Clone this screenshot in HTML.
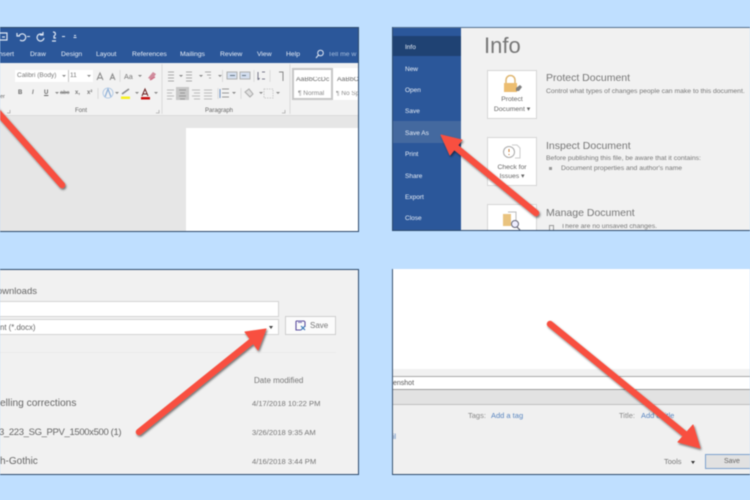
<!DOCTYPE html>
<html><head><meta charset="utf-8">
<style>
html,body{margin:0;padding:0;width:750px;height:500px;overflow:hidden;background:#bfdfff}
#w{position:absolute;left:0;top:0;width:750px;height:500px;overflow:hidden;filter:blur(.45px);font-family:"Liberation Sans",sans-serif}
.b{position:absolute}
.t{position:absolute;white-space:nowrap;line-height:1}
.tab{top:52px;font-size:6.800px;color:#e8eef7}
.nav{left:405px;font-size:6.500px;color:#e8eef7}
</style></head><body><div id="w">

<!-- Panel 1 -->
<div class="b" style="left:0;top:27px;width:358px;height:205px;background:#e6e6e6"></div>
<div class="b" style="left:0;top:27px;width:358px;height:36px;background:#2b579a"></div>
<div class="b" style="left:0;top:63px;width:358px;height:52px;background:#f2f2f2;border-bottom:1px solid #dcdcdc"></div>
<div class="b" style="left:186px;top:128px;width:172px;height:103px;background:#fff"></div>
<svg class="b" style="left:0;top:27px" width="100" height="22" viewBox="0 27 100 22"><g fill="none" stroke="#dfe7f3" stroke-width="1.200"><path d="M0 33h7v7H0"/><path d="M2 37h3"/><path d="M19 36a3.500 3.500 0 1 1 1 4M17 33v3h3"/><path d="M43 35a3.500 3.500 0 1 0 1 3M43 32v3h-3"/><path d="M53 32c3 0 3 3 1 4v2h2M52 41h4"/></g><path d="M27 36.500h3M62 36.500h3M74 35.500h2M73.500 37.500h3" stroke="#dfe7f3"/></svg>
<div class="t tab" style="left:-3px">Insert</div>
<div class="t tab" style="left:30px">Draw</div>
<div class="t tab" style="left:61px">Design</div>
<div class="t tab" style="left:96px">Layout</div>
<div class="t tab" style="left:132px">References</div>
<div class="t tab" style="left:180px">Mailings</div>
<div class="t tab" style="left:220px">Review</div>
<div class="t tab" style="left:257px">View</div>
<div class="t tab" style="left:286px">Help</div>
<svg class="b" style="left:315px;top:49px" width="10" height="10"><circle cx="5.500" cy="4" r="2.800" fill="none" stroke="#dfe7f3"/><path d="M3.500 6L1 9" stroke="#dfe7f3"/></svg>
<div class="t tab" style="left:328px;color:#a9bfde;width:30px;overflow:hidden">Tell me w</div>

<div class="t" style="left:0;top:95px;font-size:5.500px;color:#666">er</div>
<div class="b" style="left:15px;top:70px;width:53px;height:12px;background:#fff"></div>
<div class="b" style="left:68px;top:70px;width:24px;height:12px;background:#fff;border-left:1px solid #c4c4c4"></div>
<div class="t" style="left:17px;top:73px;font-size:6.500px;color:#777">Calibri (Body)</div>
<div class="t" style="left:70px;top:73px;font-size:6.500px;color:#777">11</div>
<svg class="b" style="left:0;top:64px" width="360" height="52" viewBox="0 64 360 52">
<path d="M62 75l2 2 2-2zM87 75l2 2 2-2zM138 75l2 2 2-2zM179 75l2 2 2-2zM199 75l2 2 2-2zM218 75l2 2 2-2zM55 92l2 2 2-2zM115 92l2 2 2-2zM135 92l2 2 2-2zM154 92l2 2 2-2zM232 92l2 2 2-2zM259 92l2 2 2-2zM276 92l2 2 2-2z" fill="#888"/>
<g stroke="#dadada" fill="none"><path d="M120 70v12M162 64v50M98 88v11M222.500 70v12M254 70v12M270 70v12M218 88v11M241 88v11M290 64v50"/></g>
<path d="M97 80l3-7 3 7M98 78h4M110 80l2.500-6 2.500 6M111 78h3" fill="none" stroke="#888" stroke-width="1"/>
<path d="M148 78l5-6 3 2-4 6z" fill="#d08b9c"/><path d="M150 80l5-3" stroke="#cf6980" stroke-width="1.300"/>
<g stroke="#aaa"><path d="M168 72h6M168 75h6M168 78h6M168 81h6"/><path d="M186 72h6M186 75h6M186 78h6M186 81h6"/><path d="M205 72h6M207 75h4M209 78h2"/></g>
<g fill="#d3deee" stroke="#b0b0b0"><rect x="227" y="72" width="10" height="7"/><rect x="240" y="72" width="10" height="7"/></g>
<path d="M230 75.500h5M246 75.500h-4" stroke="#678"/>
<path d="M258 72v8M262 72h3M262 79h3" stroke="#778" fill="none"/><path d="M257 78l2 2 1-2" fill="#778"/>
<path d="M279 72h4v9M283 72v9" stroke="#888" fill="none"/>
<rect x="176" y="87" width="13" height="13" fill="#c8c8c8"/>
<g stroke="#bbb"><path d="M167 90h7M167 93h5M167 96h7M167 99h5"/><path d="M179 90h7M180 93h5M179 96h7M180 99h5" stroke="#999"/><path d="M192 90h8M194 93h6M192 96h8M194 99h6"/><path d="M204 90h8M204 93h8M204 96h8M204 99h8"/></g>
<path d="M222 89h7M222 93h7M222 97h7" stroke="#999"/><path d="M220 89v9" stroke="#6a90c2"/>
<path d="M245 92l4-3 4 5-3 3z" fill="#e0e0e0" stroke="#aaa"/>
<rect x="264" y="89" width="9" height="9" fill="none" stroke="#ccc" stroke-dasharray="1.500 1"/>
<path d="M105 97l3-8 3 8" fill="none" stroke="#8fb0d8" stroke-width="1.200"/>
<circle cx="108" cy="93" r="5" fill="none" stroke="#aac4e3" stroke-width=".8"/>
<path d="M122 94l7-5" stroke="#888" stroke-width="1.500"/><rect x="121" y="96.500" width="9" height="2.500" fill="#f6f01e"/>
<path d="M142 96l3-7 3 7M143 94h4" fill="none" stroke="#6b2020" stroke-width="1"/><rect x="141" y="97" width="9" height="2.500" fill="#c91010"/>
<path d="M7 113h3v-3M156 113h3v-3M282 113h3v-3" stroke="#aaa" fill="none" stroke-width=".8"/>
</svg>
<div class="t" style="left:18px;top:90px;font-size:6px;font-weight:bold;color:#666">B</div>
<div class="t" style="left:32px;top:90px;font-size:6px;font-style:italic;font-weight:bold;color:#777">I</div>
<div class="t" style="left:44px;top:90px;font-size:6px;font-weight:bold;color:#666;text-decoration:underline">U</div>
<div class="t" style="left:60px;top:90.500px;font-size:5.800px;color:#777;text-decoration:line-through">abc</div>
<div class="t" style="left:75px;top:90px;font-size:6px;font-weight:bold;color:#777">x,</div>
<div class="t" style="left:87px;top:90px;font-size:6px;font-weight:bold;color:#777">x²</div>
<div class="t" style="left:124px;top:72.500px;font-size:7.200px;color:#777">Aa</div>
<div class="t" style="left:75px;top:108px;font-size:6px;color:#666">Font</div>
<div class="t" style="left:205px;top:108px;font-size:6px;color:#666">Paragraph</div>
<div class="b" style="left:292px;top:68px;width:41px;height:32px;background:#fff;border:2px solid #c6c6c6;box-sizing:border-box"></div>
<div class="b" style="left:333px;top:68px;width:25px;height:32px;background:#fff"></div>
<div class="t" style="left:296px;top:77px;font-size:6.800px;color:#666;width:34px;overflow:hidden">AaBbCcDc</div>
<div class="t" style="left:337px;top:77px;font-size:6.800px;color:#666;width:21px;overflow:hidden">AaBbC</div>
<div class="t" style="left:298px;top:90.500px;font-size:6.500px;color:#888">¶ Normal</div>
<div class="t" style="left:336px;top:90.500px;font-size:6.500px;color:#888;width:22px;overflow:hidden">¶ No Sp</div>
<div class="b" style="left:358px;top:27px;width:1px;height:205px;background:#2e4a6c"></div>
<div class="b" style="left:0;top:27px;width:359px;height:1px;background:#2e4a6c"></div>
<div class="b" style="left:0;top:231px;width:359px;height:1px;background:#2e4a6c"></div>

<!-- Panel 2 -->
<div class="b" style="left:392px;top:27px;width:358px;height:204px;background:#f1f1f1;overflow:hidden"></div>
<div class="b" style="left:392px;top:27px;width:69px;height:204px;background:#2b579a"></div>
<div class="b" style="left:392px;top:36px;width:69px;height:20px;background:#1f4273"></div>
<div class="b" style="left:392px;top:121px;width:69px;height:22px;background:#44699f"></div>
<div class="b" style="left:392px;top:27px;width:358px;height:1px;background:#54708f"></div>
<div class="b" style="left:392px;top:230px;width:358px;height:1px;background:#2e4a6c"></div>
<div class="b" style="left:392px;top:27px;width:1px;height:204px;background:#2e4a6c"></div>
<div class="t nav" style="top:45px">Info</div>
<div class="t nav" style="top:67px">New</div>
<div class="t nav" style="top:88px">Open</div>
<div class="t nav" style="top:109px">Save</div>
<div class="t nav" style="top:131px">Save As</div>
<div class="t nav" style="top:152px">Print</div>
<div class="t nav" style="top:174px">Share</div>
<div class="t nav" style="top:195px">Export</div>
<div class="t nav" style="top:216px">Close</div>
<div class="t" style="left:484px;top:34.500px;font-size:22px;color:#777">Info</div>
<div class="b" style="left:487px;top:70px;width:50px;height:49px;background:#fff;border:1px solid #d6d6d6;box-sizing:border-box"></div>
<div class="b" style="left:487px;top:137px;width:50px;height:49px;background:#fff;border:1px solid #d6d6d6;box-sizing:border-box"></div>
<div class="b" style="left:487px;top:204px;width:50px;height:26px;background:#fff;border:1px solid #d6d6d6;border-bottom:0;box-sizing:border-box"></div>
<svg class="b" style="left:486px;top:69px" width="51" height="161" viewBox="0 0 51 161">
<path d="M20 14v-3a4.500 4.500 0 0 1 9 0v3" fill="none" stroke="#dfb670" stroke-width="1.500"/><rect x="18" y="14" width="13" height="9" fill="#ecbd70"/><path d="M30 19l4-3 2 2-3 4-3 0z" fill="#808080"/>
<circle cx="23" cy="83" r="5.500" fill="none" stroke="#aaa"/><path d="M26 76h5l3 3v10h-5" fill="none" stroke="#ccc"/><path d="M23 80v3M23 85v1" stroke="#c97a30"/>
<path d="M17 145h8v12h-8z" fill="#e9c37f"/><path d="M22 143h8v9" fill="none" stroke="#bbb"/><circle cx="29" cy="155" r="3.500" fill="#eef" stroke="#667"/><path d="M31 158l3 3" stroke="#667" stroke-width="1.200"/>
</svg>
<div class="t" style="left:487px;top:97px;width:50px;text-align:center;font-size:6.800px;color:#666">Protect</div>
<div class="t" style="left:487px;top:106.500px;width:50px;text-align:center;font-size:6.800px;color:#666">Document ▾</div>
<div class="t" style="left:487px;top:164.500px;width:50px;text-align:center;font-size:6.800px;color:#666">Check for</div>
<div class="t" style="left:487px;top:173.500px;width:50px;text-align:center;font-size:6.800px;color:#666">Issues ▾</div>
<div class="t" style="left:546px;top:72.500px;font-size:10.500px;color:#777">Protect Document</div>
<div class="t" style="left:546px;top:88.500px;font-size:6.800px;color:#777">Control what types of changes people can make to this document.</div>
<div class="t" style="left:546px;top:141px;font-size:10.500px;color:#777">Inspect Document</div>
<div class="t" style="left:546px;top:155.500px;font-size:6.800px;color:#777">Before publishing this file, be aware that it contains:</div>
<div class="b" style="left:549px;top:167px;width:3px;height:3px;background:#999"></div>
<div class="t" style="left:561px;top:166px;font-size:6.800px;color:#777">Document properties and author's name</div>
<div class="t" style="left:546px;top:208px;font-size:10.500px;color:#777">Manage Document</div>
<div class="t" style="left:561px;top:224px;font-size:6.800px;color:#777;height:6px;overflow:hidden">There are no unsaved changes.</div>
<div class="b" style="left:549px;top:225px;width:5px;height:5px;border:1px solid #999;border-bottom:0;box-sizing:border-box"></div>

<!-- Panel 3 -->
<div class="b" style="left:0;top:269px;width:359px;height:206px;background:#f1f1f1;border:1px solid #2e4a6c;border-left:0;box-sizing:border-box"></div>
<div class="t" style="left:-10px;top:287px;font-size:9.500px;color:#666">Downloads</div>
<div class="b" style="left:0;top:301px;width:279px;height:16px;background:#fff;border:1px solid #d4d4d4;border-left:0;box-sizing:border-box"></div>
<div class="b" style="left:0;top:319px;width:279px;height:16px;background:#fff;border:1px solid #d4d4d4;border-left:0;box-sizing:border-box"></div>
<div class="t" style="left:0;top:323.500px;font-size:7.800px;color:#666">nt (*.docx)</div>
<div class="b" style="left:269px;top:326px;width:0;height:0;border-left:2.500px solid transparent;border-right:2.500px solid transparent;border-top:3px solid #444"></div>
<div class="b" style="left:285px;top:316px;width:51px;height:19px;background:#fbfbfb;border:1px solid #cfcfcf;box-sizing:border-box"></div>
<svg class="b" style="left:295px;top:320px" width="12" height="11"><path d="M1 1h8l1 1v5M1 1v9h5" fill="none" stroke="#5c4f9e" stroke-width="1.100"/><path d="M3 1h4v2H3z" fill="#9a92c6"/><path d="M6 6l4 4M10 6l-4 4" stroke="#3a77b8" stroke-width="1.200"/></svg>
<div class="t" style="left:310px;top:321.500px;font-size:8px;color:#777">Save</div>
<div class="b" style="left:0;top:352px;width:336px;height:1px;background:#eaeaea"></div>
<div class="t" style="left:254px;top:377px;font-size:8px;color:#777">Date modified</div>
<div class="t" style="left:0;top:399px;font-size:10.200px;color:#666">elling corrections</div>
<div class="t" style="left:252px;top:399.500px;font-size:7.600px;color:#777">4/17/2018 10:22 PM</div>
<div class="t" style="left:-1px;top:428px;font-size:9.500px;color:#666;letter-spacing:-.35px">3_223_SG_PPV_1500x500 (1)</div>
<div class="t" style="left:252px;top:428.500px;font-size:7.600px;color:#777">3/26/2018 9:35 AM</div>
<div class="t" style="left:0;top:457px;font-size:10px;color:#666">h-Gothic</div>
<div class="t" style="left:252px;top:457.500px;font-size:7.600px;color:#777">4/16/2018 3:44 PM</div>

<!-- Panel 4 -->
<div class="b" style="left:392px;top:269px;width:358px;height:206px;background:#fff"></div>
<div class="b" style="left:393px;top:369px;width:357px;height:8px;background:#f1f1f1;border-bottom:1px solid #a8a8a8;box-sizing:border-box"></div>
<div class="b" style="left:393px;top:377px;width:357px;height:13px;background:#fff;border-bottom:1px solid #9c9c9c;box-sizing:border-box"></div>
<div class="b" style="left:393px;top:390px;width:357px;height:15px;background:#e2e2e2;border-bottom:1px solid #c0c0c0;box-sizing:border-box"></div>
<div class="b" style="left:393px;top:405px;width:357px;height:69px;background:#f0f0f0"></div>
<div class="b" style="left:392px;top:269px;width:1px;height:206px;background:#3a5472"></div>
<div class="b" style="left:392px;top:474px;width:358px;height:1px;background:#2e4a6c"></div>
<div class="t" style="left:393px;top:379.500px;font-size:7px;color:#555">enshot</div>
<div class="t" style="left:468px;top:412px;font-size:7.500px;color:#888">Tags:</div>
<div class="t" style="left:491px;top:412px;font-size:7.500px;color:#5a86c0">Add a tag</div>
<div class="t" style="left:619px;top:412px;font-size:7.500px;color:#888">Title:</div>
<div class="t" style="left:641px;top:412px;font-size:7.500px;color:#5a86c0">Add a title</div>
<div class="t" style="left:393px;top:434px;font-size:7px;color:#5a86c0">il</div>
<div class="t" style="left:664px;top:458px;font-size:7.500px;color:#777">Tools</div>
<div class="b" style="left:691px;top:461px;width:0;height:0;border-left:2.500px solid transparent;border-right:2.500px solid transparent;border-top:3px solid #333"></div>
<div class="b" style="left:705px;top:454px;width:45px;height:15px;background:#e1e1e1;border:1.500px solid #7da2ce;border-right:0;box-sizing:border-box"></div>
<div class="t" style="left:724px;top:458px;font-size:7px;color:#666">Save</div>

<!-- Arrows -->
<svg class="b" style="left:0;top:0" width="750" height="500" viewBox="0 0 750 500">
<defs><filter id="s" x="-20%" y="-20%" width="140%" height="140%"><feDropShadow dx="1" dy="1.500" stdDeviation="1" flood-color="#000" flood-opacity=".55"/></filter></defs>
<g filter="url(#s)" fill="#f8503f" stroke="#f8503f" stroke-linecap="round" stroke-linejoin="round">
<path d="M62 185L-5 109" stroke-width="6.500" fill="none"/>
<path d="M536 213L453 145" stroke-width="6.500" fill="none"/>
<path d="M441 135L462 140 450 155z" stroke-width="1"/>
<path d="M139 432L252 341" stroke-width="6.500" fill="none"/>
<path d="M266 329L258 350 245 332z" stroke-width="1"/>
<path d="M550 324L686 435" stroke-width="6.500" fill="none"/>
<path d="M700 448L693 425 678 442z" stroke-width="1"/>
</g>
</svg>
</div></body></html>
